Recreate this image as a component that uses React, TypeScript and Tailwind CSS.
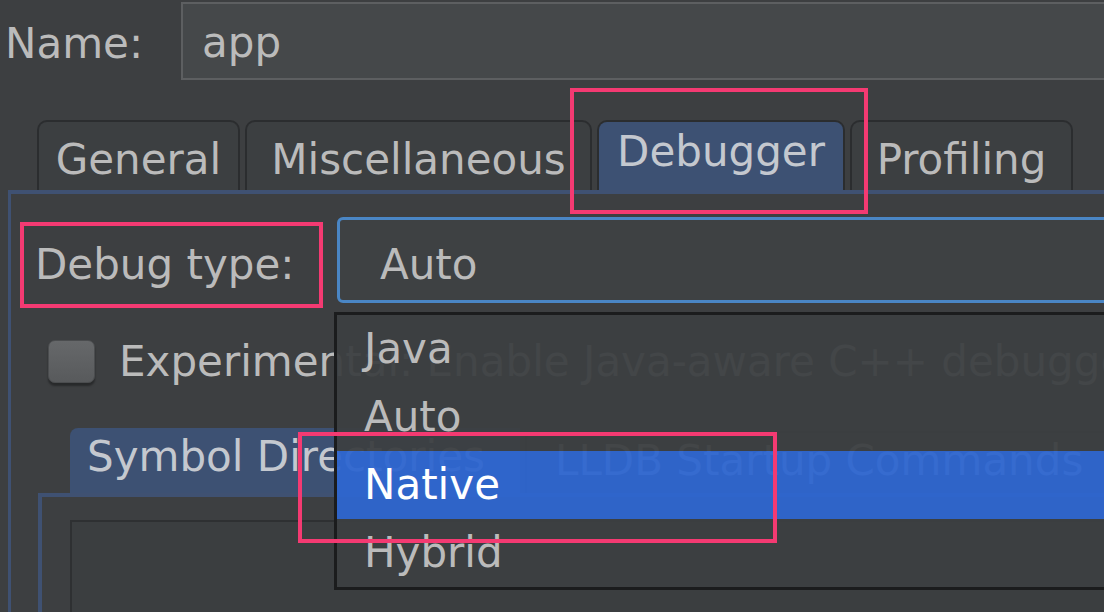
import React from "react";

const PINK = "border-[#f43a72]";

function Tab({
  label,
  width,
  selected,
  pt,
}: {
  label: string;
  width: string;
  selected?: boolean;
  pt: string;
}) {
  return (
    <div
      className={`${width} h-[70px] flex-none rounded-t-[10px] border-2 border-b-0 border-[#2b2d2f] flex justify-center ${pt} ${
        selected ? "bg-[#3d5173] text-[#c4c8cf]" : "bg-[#3c3f41]"
      }`}
    >
      <span className="leading-[48px] whitespace-nowrap">{label}</span>
    </div>
  );
}

export default function App() {
  return (
    <div className="relative w-[1104px] h-[612px] overflow-hidden bg-[#3d3f41] text-[#bbbbbb] text-[42px] font-['DejaVu_Sans',sans-serif] flex flex-col">
      {/* Name row */}
      <div className="flex flex-none h-[78px] mt-[2px]">
        <div className="w-[181px] flex-none pl-[5px] pt-[18px] leading-[48px]">Name:</div>
        <div className="w-[1000px] flex-none h-[78px] border-2 border-[#5d5f61] bg-[#45484a] pl-[19px] pt-[15px] leading-[48px]">
          app
        </div>
      </div>

      {/* Tabs row */}
      <div className="flex flex-none items-end h-[110px] pl-[37px] gap-[5px]">
        <Tab label="General" width="w-[203px]" pt="pt-[14px]" />
        <Tab label="Miscellaneous" width="w-[347px]" pt="pt-[14px]" />
        <Tab label="Debugger" width="w-[248px]" pt="pt-[6px]" selected />
        <Tab label="Profiling" width="w-[223px]" pt="pt-[14px]" />
      </div>

      {/* Main panel */}
      <div className="flex-1 ml-[8px] border-t-[4px] border-l-[3px] border-[#3f5172] flex flex-col">
        {/* Debug type row */}
        <div className="flex flex-none mt-[23px] h-[86px]">
          <div className="w-[326px] flex-none pl-[24px] pt-[24px] leading-[48px]">Debug type:</div>
          <div className="w-[900px] flex-none h-[86px] border-[3px] border-[#4a86c5] rounded-[6px] bg-[#3e4143] pl-[40px] pt-[21px] leading-[48px]">
            Auto
          </div>
        </div>

        {/* Checkbox row */}
        <div className="flex flex-none items-start mt-[37px] h-[44px]">
          <div className="ml-[37px] w-[47px] h-[43px] flex-none rounded-[7px] border border-[#4b4d4f] bg-gradient-to-b from-[#66686a] to-[#585a5c] shadow-[0_3px_2px_rgba(0,0,0,0.35)]" />
          <div className="ml-[24px] leading-[44px] whitespace-nowrap">
            Experimental: Enable Java-aware C++ debugger
          </div>
        </div>

        {/* Nested tabbed pane */}
        <div className="flex-1 flex flex-col mt-[44px] ml-[27px]">
          <div className="flex flex-none items-end h-[65px] pl-[32px] gap-[5px]">
            <div className="w-[450px] h-[65px] flex-none rounded-tl-[8px] bg-[#3d5173] pl-[17px] pt-[5px] leading-[48px] whitespace-nowrap text-[#c4c8cf]">
              Symbol Directories
            </div>
            <div className="w-[640px] h-[62px] flex-none rounded-t-[8px] border-2 border-b-0 border-[#2b2d2f] pl-[28px] pt-[4px] leading-[48px] whitespace-nowrap">
              LLDB Startup Commands
            </div>
          </div>
          <div className="flex-1 border-t-[4px] border-l-[4px] border-[#3f5172] flex flex-col">
            <div className="flex-1 mt-[23px] ml-[28px] border-2 border-b-0 border-r-0 border-[#2e3032] bg-[#3b3e40]" />
          </div>
        </div>
      </div>

      {/* Dropdown popup */}
      <div className="absolute left-[334px] top-[312px] w-[800px] h-[278px] border-[3px] border-r-0 border-[#1b1c1d] flex flex-col">
        <div className="h-[68px] flex-none bg-[#3c3f41]/[0.95] pl-[27px] leading-[68px]">Java</div>
        <div className="h-[68px] flex-none bg-[#3c3f41]/[0.95] pl-[27px] leading-[68px]">Auto</div>
        <div className="h-[68px] flex-none bg-[#2e66d0]/[0.95] pl-[27px] leading-[68px] text-white">Native</div>
        <div className="flex-1 bg-[#3c3f41]/[0.95] pl-[27px] leading-[68px]">Hybrid</div>
      </div>

      {/* Annotation boxes */}
      <div className={`absolute left-[570px] top-[88px] w-[298px] h-[126px] border-[4px] ${PINK}`} />
      <div className={`absolute left-[20px] top-[222px] w-[303px] h-[86px] border-[4px] ${PINK}`} />
      <div className={`absolute left-[298px] top-[432px] w-[479px] h-[111px] border-[4px] ${PINK}`} />
    </div>
  );
}
